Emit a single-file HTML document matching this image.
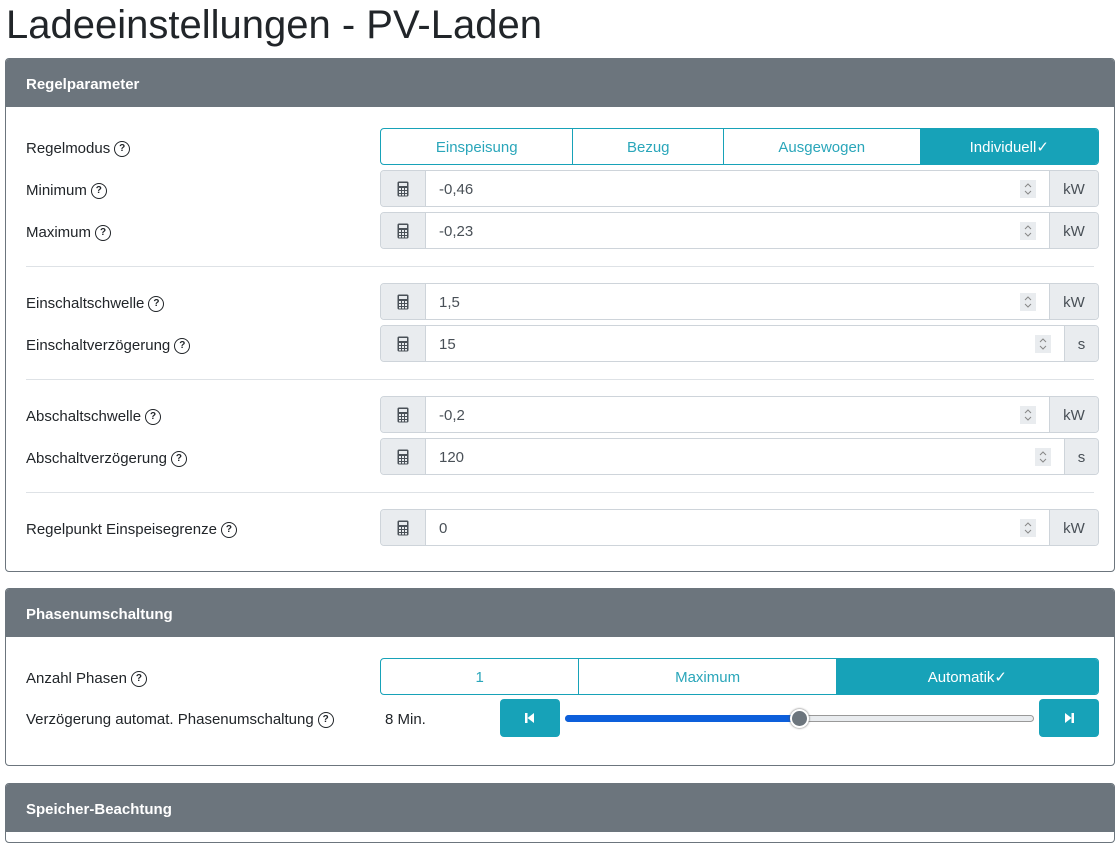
<!DOCTYPE html>
<html><head><meta charset="utf-8"><style>
*{box-sizing:border-box;margin:0;padding:0}
body{width:1117px;height:818px;overflow:hidden;background:#fff;font-family:"Liberation Sans",Arial,sans-serif;color:#212529;position:relative}
.a{position:absolute}
h1{position:absolute;left:6px;top:3px;font-size:40px;font-weight:400;color:#212529}
.card{position:absolute;left:5px;width:1110px;border:1px solid #6c757d;border-radius:4px;overflow:hidden}
.hdr{position:absolute;left:0;top:0;right:0;height:48px;background:#6c757d;color:#fff;font-weight:bold;font-size:15px;padding:17px 0 0 20px}
.lbl{position:absolute;left:26px;font-size:15px;color:#212529;line-height:18px}
.q{display:inline-block;width:16px;height:16px;border:1.5px solid #212529;border-radius:50%;font-size:10px;font-weight:bold;text-align:center;line-height:13px;vertical-align:top;margin-top:1px;margin-left:4px}
.bg{position:absolute;left:380px;width:719px;height:37px;border:1px solid #17a2b8;border-radius:4px;overflow:hidden;display:flex}
.bg div{height:100%;color:#2aa6ba;font-size:15px;text-align:center;line-height:37px;border-right:1px solid #17a2b8}
.bg div.on{background:#17a2b8;color:#fff;border-right:0}
.ig{position:absolute;left:380px;width:719px;height:37px;border:1px solid #ced4da;border-radius:4px;overflow:hidden}
.pre{position:absolute;left:0;top:0;width:45px;height:35px;background:#e9ecef;border-right:1px solid #ced4da}
.pre svg{position:absolute;left:16px;top:10px}
.val{position:absolute;left:58px;top:10px;font-size:15px;color:#495057}
.sp{position:absolute;top:9px;width:16px;height:18px;background:#e9ecef}
.app{position:absolute;top:0;right:0;height:35px;background:#e9ecef;border-left:1px solid #ced4da;font-size:15px;color:#495057;text-align:center;line-height:37px}
.hr{position:absolute;left:26px;width:1068px;height:1px;background:#dee2e6}
.btn{position:absolute;top:699px;width:60px;height:38px;background:#17a2b8;border-radius:4px}
</style></head><body>
<svg width="0" height="0" style="position:absolute"><defs>
<symbol id="calc" viewBox="0 0 12 16"><rect x="0.5" y="0.5" width="11" height="15" rx="1.5" fill="#495057"/><rect x="2" y="2" width="8" height="3" fill="#e9ecef"/><g fill="#e9ecef"><rect x="2" y="7" width="2" height="2"/><rect x="5" y="7" width="2" height="2"/><rect x="8" y="7" width="2" height="2"/><rect x="2" y="10" width="2" height="2"/><rect x="5" y="10" width="2" height="2"/><rect x="8" y="10" width="2" height="2"/><rect x="2" y="13" width="2" height="1.5"/><rect x="5" y="13" width="2" height="1.5"/><rect x="8" y="13" width="2" height="1.5"/></g></symbol>
<symbol id="spin" viewBox="0 0 16 18"><path d="M5 7 L8 4 L11 7 M5 11 L8 14 L11 11" fill="none" stroke="#888" stroke-width="1"/></symbol>
</defs></svg>
<h1>Ladeeinstellungen - PV-Laden</h1>

<div class="card" style="top:58px;height:514px"><div class="hdr">Regelparameter</div></div>
<div class="card" style="top:588px;height:178px"><div class="hdr">Phasenumschaltung</div></div>
<div class="card" style="top:783px;height:60px"><div class="hdr">Speicher-Beachtung</div></div>

<div class="lbl" style="top:140px">Regelmodus<span class="q">?</span></div>
<div class="bg" style="top:128px"><div style="width:193px">Einspeisung</div><div style="width:151px">Bezug</div><div style="width:197px">Ausgewogen</div><div class="on" style="width:178px">Individuell✓</div></div>

<div class="lbl" style="top:182px">Minimum<span class="q">?</span></div>
<div class="ig" style="top:170px"><div class="pre"><svg width="12" height="16"><use href="#calc"/></svg></div><div class="val">-0,46</div><svg class="sp" style="left:639px"><use href="#spin"/></svg><div class="app" style="width:49px">kW</div></div>

<div class="lbl" style="top:224px">Maximum<span class="q">?</span></div>
<div class="ig" style="top:212px"><div class="pre"><svg width="12" height="16"><use href="#calc"/></svg></div><div class="val">-0,23</div><svg class="sp" style="left:639px"><use href="#spin"/></svg><div class="app" style="width:49px">kW</div></div>

<div class="hr" style="top:266px"></div>

<div class="lbl" style="top:295px">Einschaltschwelle<span class="q">?</span></div>
<div class="ig" style="top:283px"><div class="pre"><svg width="12" height="16"><use href="#calc"/></svg></div><div class="val">1,5</div><svg class="sp" style="left:639px"><use href="#spin"/></svg><div class="app" style="width:49px">kW</div></div>

<div class="lbl" style="top:337px">Einschaltverzögerung<span class="q">?</span></div>
<div class="ig" style="top:325px"><div class="pre"><svg width="12" height="16"><use href="#calc"/></svg></div><div class="val">15</div><svg class="sp" style="left:654px"><use href="#spin"/></svg><div class="app" style="width:34px">s</div></div>

<div class="hr" style="top:379px"></div>

<div class="lbl" style="top:408px">Abschaltschwelle<span class="q">?</span></div>
<div class="ig" style="top:396px"><div class="pre"><svg width="12" height="16"><use href="#calc"/></svg></div><div class="val">-0,2</div><svg class="sp" style="left:639px"><use href="#spin"/></svg><div class="app" style="width:49px">kW</div></div>

<div class="lbl" style="top:450px">Abschaltverzögerung<span class="q">?</span></div>
<div class="ig" style="top:438px"><div class="pre"><svg width="12" height="16"><use href="#calc"/></svg></div><div class="val">120</div><svg class="sp" style="left:654px"><use href="#spin"/></svg><div class="app" style="width:34px">s</div></div>

<div class="hr" style="top:492px"></div>

<div class="lbl" style="top:521px">Regelpunkt Einspeisegrenze<span class="q">?</span></div>
<div class="ig" style="top:509px"><div class="pre"><svg width="12" height="16"><use href="#calc"/></svg></div><div class="val">0</div><svg class="sp" style="left:639px"><use href="#spin"/></svg><div class="app" style="width:49px">kW</div></div>

<div class="lbl" style="top:670px">Anzahl Phasen<span class="q">?</span></div>
<div class="bg" style="top:658px"><div style="width:199px">1</div><div style="width:258px">Maximum</div><div class="on" style="width:262px">Automatik✓</div></div>

<div class="lbl" style="top:711px">Verzögerung automat. Phasenumschaltung<span class="q">?</span></div>
<div class="a" style="left:385px;top:711px;font-size:15px">8 Min.</div>
<div class="btn" style="left:500px"><svg class="a" style="left:24px;top:13px" width="12" height="12"><rect x="1" y="1" width="2.5" height="10" fill="#fff"/><path d="M10 1 L3.5 6 L10 11 Z" fill="#fff"/></svg></div>
<div class="a" style="left:565px;top:715px;width:469px;height:7px;border:1px solid #999;border-radius:4px;background:#e9ecef"></div>
<div class="a" style="left:565px;top:715px;width:236px;height:7px;border-radius:4px;background:#0d5fdb"></div>
<div class="a" style="left:790px;top:709px;width:19px;height:19px;border-radius:50%;background:#6c757d;border:2px solid #fff;box-shadow:0 0 2px #555"></div>
<div class="btn" style="left:1039px"><svg class="a" style="left:24px;top:13px" width="12" height="12"><rect x="8.5" y="1" width="2.5" height="10" fill="#fff"/><path d="M2 1 L8.5 6 L2 11 Z" fill="#fff"/></svg></div>
</body></html>
